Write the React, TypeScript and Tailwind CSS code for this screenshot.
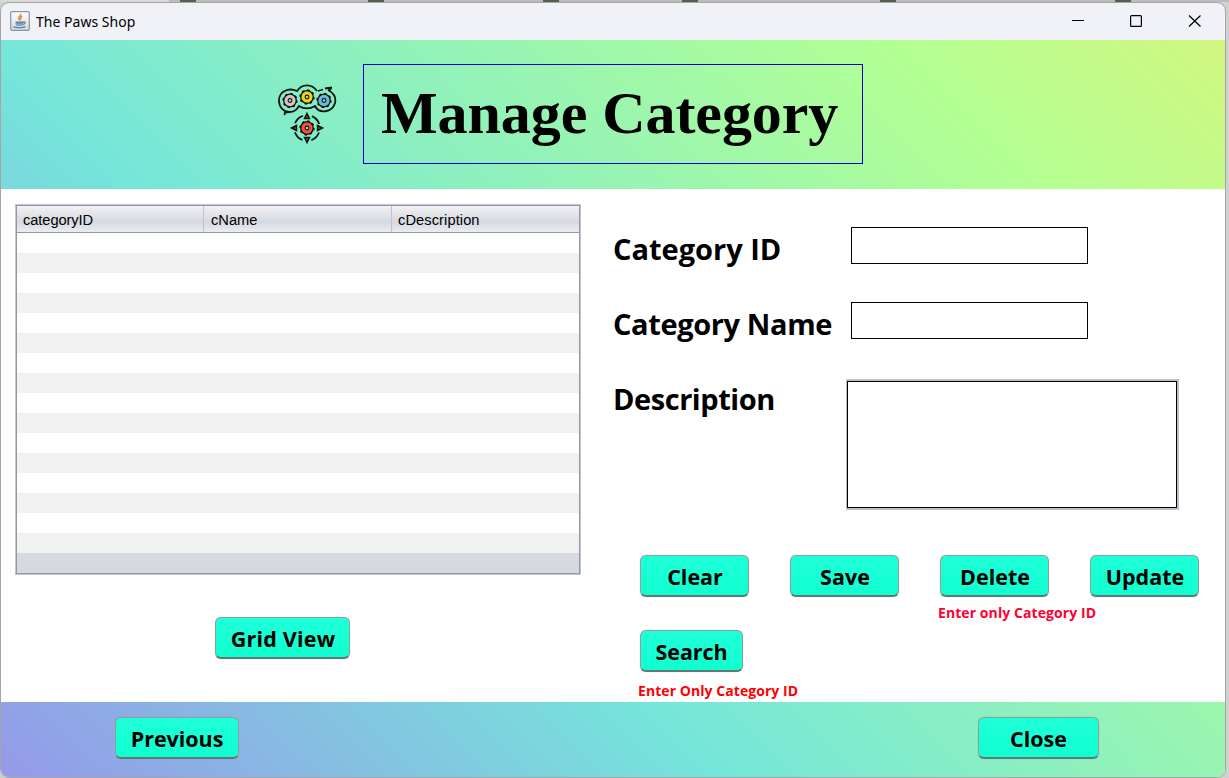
import type { ReactNode } from "react";

function ActionButton({ className, textClass, children }: { className: string; textClass: string; children: ReactNode }) {
  return (
    <button
      className={`flex h-[42px] shrink-0 items-center justify-center rounded-[6px] border-[1.5px] border-b-2 border-[#8da09f] border-b-[#5f7878] bg-linear-to-b from-[#1fffd9] to-[#0fffd0] pt-[3px] text-[21.5px] leading-none font-bold text-black shadow-[0_0_1px_#9aa5a5] ${className}`}
    >
      <span className={`whitespace-nowrap ${textClass}`}>{children}</span>
    </button>
  );
}

function JavaIcon() {
  return (
    <svg className="-mt-px size-5" viewBox="0 0 20 20" fill="none">
      <defs>
        <linearGradient id="tile" x1="0" y1="0" x2="0" y2="1">
          <stop offset="0" stopColor="#fff" />
          <stop offset="1" stopColor="#d6d9dc" />
        </linearGradient>
      </defs>
      <rect x=".7" y=".7" width="18.6" height="18.6" rx="1.2" fill="url(#tile)" stroke="#7f97a9" strokeWidth="1.2" />
      <path d="M10.800 2.800c.8 2-2.800 2.600-2 4.700.3.900 1 1.300 1.100 2.200M12.200 5.300c-1.500.8-2.200 1.800-1.200 3.300" stroke="#ee8a45" strokeWidth="1.600" />
      <path d="M5.500 10.300h8v2.400c0 1.600-1.200 2.300-2.500 2.300H8c-1.600 0-2.500-.8-2.500-2.300z" fill="#86a5bd" />
      <path d="M6 11.200c2 .6 5.500.6 7.300 0M3.500 15.600c2.500 1.300 9.500 1.300 12 0M13.300 11c2.700-.6 2.500 2-.3 2.300" stroke="#557f9f" strokeWidth="1.200" />
    </svg>
  );
}

function Gear({ x, y, fill }: { x: number; y: number; fill: string }) {
  return (
    <g transform={`translate(${x} ${y})`}>
      <circle r="6.300" fill={fill} stroke="#0b1310" strokeWidth="1.300" />
      <circle r="6.800" fill="none" stroke="#0b1310" strokeWidth="1.800" strokeDasharray="2.340 3" />
      <circle r="1.900" fill="#9fd9d0" stroke="#0b1310" strokeWidth="1.100" />
    </g>
  );
}

function GearsLogo() {
  return (
    <svg className="h-[60px] w-[60px]" viewBox="0 0 60 60" fill="none">
      <g stroke="#081410" strokeWidth="1.800">
        <path d="M40 7C35-.5 25-.5 20 7C11 3 2 8 2 16.500C2 23 6 28 13 28C18 28 20 25 22 22C27 25 33 25 38 22C42 30 55 29 58 19C59.500 13 56 8 51 6M46 5.500L41 7" />
        <path d="M13 28l-6 .5M8 28l-.5 3" />
        <path d="M48 4.500l7-1M54.500 3.500l-3 3.500" strokeWidth="2.200" />
        <circle cx="30" cy="44" r="12.800" strokeDasharray="11 9.106" strokeDashoffset="-4.550" />
      </g>
      <Gear x={13} y={16.5} fill="#d9bfc2" />
      <Gear x={30} y={13} fill="#f5d010" />
      <Gear x={47} y={16.5} fill="#6eb7dc" />
      <Gear x={30} y={44} fill="#f5503d" />
      <g fill="#665715" stroke="#081410" strokeWidth="1.500">
        <path d="M30 29.500l2.500 5h-5zM30 58.500l-2.500-5h5zM14.500 44l5-2.500v5zM45.500 44l-5-2.500v5z" />
      </g>
    </svg>
  );
}

const strips = [
  "left-0 w-[169px] bg-[#d9d9d9]",
  "left-[169px] w-[1060px] bg-[#bcbcbc]",
  "left-[180px] w-4 bg-[#526052]",
  "left-[368px] w-4 bg-[#526052]",
  "left-[543px] w-4 bg-[#526052]",
  "left-[682px] w-4 bg-[#526052]",
  "left-[880px] w-4 bg-[#526052]",
  "left-[1115px] w-4 bg-[#526052]",
];

export default function App() {
  return (
    <div className="relative h-[778px] w-[1229px] overflow-hidden bg-[#d0d0d0] font-['Open_Sans','Noto_Sans',sans-serif] text-black">
      {strips.map((s) => (
        <div key={s} className={`absolute top-0 h-[2px] ${s}`} />
      ))}
      <div className="relative mt-[2px] flex h-[776px] w-[1226px] flex-col overflow-hidden rounded-[9px] border border-[#a5a5a5] bg-[#f0f2f7]">
        <header className="flex h-[37px] shrink-0 items-center pl-[9px]">
          <JavaIcon />
          <span className="ml-[6px] font-['Noto_Sans',sans-serif] text-[14px] tracking-[0.02px]">The Paws Shop</span>
          <svg className="mt-[-2px] mr-[23px] ml-auto h-3 w-[130px]" viewBox="0 0 130 12" fill="none" stroke="#000" strokeWidth="1.200">
            <path d="M0 5.500h12" />
            <rect x="58.600" y=".600" width="10.800" height="10.800" rx="1" />
            <path d="M117 0.500l11.500 11M128.500 .5L117 11.500" />
          </svg>
        </header>
        <div className="flex h-[737px] shrink-0 flex-col bg-[linear-gradient(45deg,#9599e9_0%,#75e6da_37%,#b2ff94_82%,#d4f67e_102%)]">
          <section className="flex h-[149px] shrink-0 items-start pt-6 pl-[276px]">
            <div className="mt-5">
              <GearsLogo />
            </div>
            <h1 className="ml-[26px] h-[100px] w-[500px] border border-[#0000c8] pt-[14px] pl-[17px] font-['Liberation_Serif',serif] text-[60px] leading-[68px] font-bold tracking-[-0.06px] whitespace-nowrap">
              Manage Category
            </h1>
          </section>
          <main className="flex h-[513px] shrink-0 bg-white">
            <section className="flex w-[596px] flex-col pt-[15px] pl-[14px]">
              <div className="h-[371px] w-[566px] border border-[#c2c6ce]">
                <div className="flex h-[369px] flex-col border border-[#9297a5] bg-white">
                  <div className="grid h-[27px] shrink-0 grid-cols-[187px_188px_187px] border-b border-[#9297a5] bg-linear-to-b from-[#f1f2f4] via-[#d6d9df] via-60% to-[#e8ecf3] font-['Liberation_Sans',sans-serif] text-[14.67px] leading-[28px]">
                    <span className="h-[26px] border-r border-[#bfc2c9] pl-[6px] tracking-[-0.08px]">categoryID</span>
                    <span className="h-[26px] border-r border-[#bfc2c9] pl-[7px]">cName</span>
                    <span className="h-[26px] pl-[6px] tracking-[0.08px]">cDescription</span>
                  </div>
                  {Array.from({ length: 16 }, (_, i) => (
                    <div key={i} className="h-5 shrink-0 odd:bg-[#f1f1f1]" />
                  ))}
                  <div className="flex-1 bg-[#d6d9e0]" />
                </div>
              </div>
              <ActionButton className="mt-[42px] ml-[200px] w-[135px]" textClass="pl-px tracking-[0.2px]">Grid View</ActionButton>
            </section>
            <section className="flex flex-1 flex-col pt-[38px] pl-4">
              <div className="flex flex-col gap-[38px] text-[29px] leading-[37px] font-bold">
                <label className="flex h-[37px]">
                  <span className="w-[238px] pt-[3px] whitespace-nowrap">Category ID</span>
                  <input className="h-[37px] w-[237px] border border-black bg-white" />
                </label>
                <label className="flex h-[37px]">
                  <span className="w-[238px] pt-[3px] tracking-[-0.38px] whitespace-nowrap">Category Name</span>
                  <input className="h-[37px] w-[237px] border border-black bg-white" />
                </label>
                <label className="flex h-[133px]">
                  <span className="w-[233px] pt-[3px] tracking-[-0.45px]">Description</span>
                  <span className="mt-[2px] h-[131px] w-[333px] border-2 border-l border-[#bcc0c8]">
                    <textarea className="block h-[127px] w-[330px] resize-none border border-black bg-white" />
                  </span>
                </label>
              </div>
              <div className="mt-[45px] ml-[27px] flex gap-[41px]">
                <ActionButton className="w-[109px]" textClass="pl-px">Clear</ActionButton>
                <ActionButton className="w-[109px]" textClass="pl-px">Save</ActionButton>
                <ActionButton className="w-[109px]" textClass="pl-px">Delete</ActionButton>
                <ActionButton className="w-[109px]" textClass="pl-px">Update</ActionButton>
              </div>
              <p className="mt-[6px] ml-[325px] h-5 text-[14px] leading-5 font-bold tracking-[0.08px] text-[#ff0033]">Enter only Category ID</p>
              <ActionButton className="mt-[7px] ml-[27px] w-[103px]" textClass="tracking-[-0.1px]">Search</ActionButton>
              <p className="mt-[9px] ml-[25px] h-5 text-[14px] leading-5 font-bold tracking-[0.06px] text-[#ff0000]">Enter Only Category ID</p>
            </section>
          </main>
          <footer className="flex flex-1 items-start pt-[15px] pl-[114px]">
            <ActionButton className="w-[124px]" textClass="tracking-[-0.03px]">Previous</ActionButton>
            <ActionButton className="ml-[739px] w-[121px]" textClass="">Close</ActionButton>
          </footer>
        </div>
      </div>
    </div>
  );
}
